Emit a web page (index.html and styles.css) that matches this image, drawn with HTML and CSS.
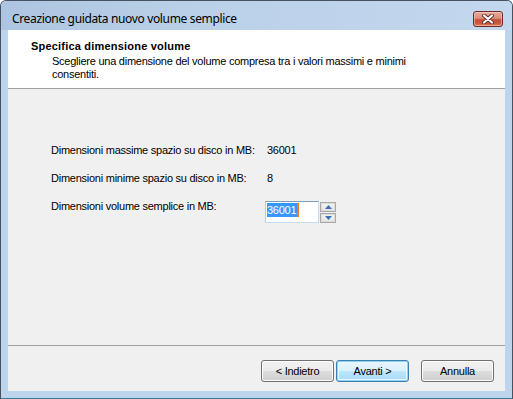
FILE: index.html
```html
<!DOCTYPE html>
<html>
<head>
<meta charset="utf-8">
<link rel="stylesheet" href="styles.css">
</head>
<body>
<div class="window">
  <div class="titlebar">
    <span class="title">Creazione guidata nuovo volume semplice</span>
    <div class="close">
      <svg width="14" height="10" viewBox="0 0 14 10">
        <path d="M3 1.5 L11 8.5 M11 1.5 L3 8.5" stroke="#5b2a25" stroke-width="4" stroke-linecap="round" fill="none"/>
        <path d="M3 1.5 L11 8.5 M11 1.5 L3 8.5" stroke="#ffffff" stroke-width="2.2" stroke-linecap="round" fill="none"/>
      </svg>
    </div>
  </div>
  <div class="client">
    <div class="header">
      <div class="h-title">Specifica dimensione volume</div>
      <div class="h-sub">Scegliere una dimensione del volume compresa tra i valori massimi e minimi<br>consentiti.</div>
    </div>
    <div class="body">
      <div class="row"><span class="label">Dimensioni massime spazio su disco in MB:</span><span class="value">36001</span></div>
      <div class="row"><span class="label">Dimensioni minime spazio su disco in MB:</span><span class="value">8</span></div>
      <div class="row"><span class="label">Dimensioni volume semplice in MB:</span>
        <div class="spin">
          <div class="input"><span class="sel">36001</span><span class="caret"></span></div>
          <div class="spinbtns">
            <div class="sb"><svg width="7" height="4" viewBox="0 0 7 4"><path d="M0 4 L3.5 0 L7 4 Z" fill="#3e6fb2"/></svg></div>
            <div class="sb"><svg width="7" height="4" viewBox="0 0 7 4"><path d="M0 0 L3.5 4 L7 0 Z" fill="#3e6fb2"/></svg></div>
          </div>
        </div>
      </div>
    </div>
    <div class="footer">
      <div class="btn">&lt; Indietro</div>
      <div class="btn default">Avanti &gt;</div>
      <div class="btn cancel">Annulla</div>
    </div>
  </div>
</div>
</body>
</html>
```
FILE: styles.css
```css
html, body {
  margin: 0;
  padding: 0;
  background: #ffffff;
}
.window {
  width: 513px;
  height: 399px;
  box-sizing: border-box;
  border: 1px solid #46525f;
  border-bottom-color: #2f7e93;
  border-radius: 6px 6px 0 0;
  background: #bcd4ec;
  display: flex;
  flex-direction: column;
  overflow: hidden;
}
.titlebar {
  height: 29px;
  flex: none;
  display: flex;
  align-items: flex-start;
  background: linear-gradient(to right, #adc5e1 0%, #bbd1e9 40%, #c3d7ee 100%);
}
.title {
  margin: 10px 0 0 11px;
  font-family: "Noto Sans", sans-serif;
  font-size: 12px;
  line-height: 16px;
  color: #000;
  flex: 1;
  letter-spacing: -0.35px;
}
.close {
  margin: 10px 9px 0 0;
  width: 30px;
  height: 16px;
  box-sizing: border-box;
  border: 1px solid #6b2a2a;
  border-radius: 3px;
  background: linear-gradient(#e9ab9c 0%, #dc8c79 45%, #c4503a 55%, #c9573f 80%, #e07a58 100%);
  box-shadow: inset 0 0 0 1px rgba(255,220,210,0.5);
  display: flex;
  align-items: center;
  justify-content: center;
}
.close svg { display: block; }
.client {
  margin: 0 7px;
  height: 361px;
  display: flex;
  flex-direction: column;
  background: #f0f0f0;
  font-family: "Liberation Sans", Arial, sans-serif;
  font-size: 11px;
  line-height: 13px;
  color: #000;
  letter-spacing: -0.25px;
}
.header {
  box-sizing: border-box;
  background: #ffffff;
  padding: 10px 0 0 23px;
  border-bottom: 1px solid #a0a0a0;
  flex: none;
  height: 59px;
}
.h-title {
  font-weight: bold;
  letter-spacing: 0.2px;
}
.h-sub {
  margin-top: 2px;
  padding-left: 21px;
}
.body {
  flex: 1;
  padding: 55px 0 0 43px;
}
.row {
  height: 28px;
  display: flex;
  align-items: flex-start;
}
.label {
  width: 214px;
  flex: none;
}
.value {
  padding-left: 2px;
}
.spin {
  display: flex;
  margin-top: 1px;
}
.input {
  width: 54px;
  height: 22px;
  box-sizing: border-box;
  background: #fff;
  border: 1px solid;
  border-color: #7f9db9 #c5daed #c5dbef #b5cfe7;
  display: flex;
  align-items: flex-start;
  padding: 1px 0 0 1px;
}
.sel {
  background: #3399ff;
  color: #fff;
  line-height: 14px;
  padding-right: 1px;
}
.caret {
  width: 2px;
  height: 14px;
  background: #ee7a1a;
}
.spinbtns {
  margin-left: 1px;
  display: flex;
  flex-direction: column;
  gap: 1px;
  padding-top: 1px;
}
.sb {
  width: 16px;
  height: 10px;
  box-sizing: border-box;
  border: 1px solid #a8a8a8;
  box-shadow: inset 0 0 0 1px #dcdcdc;
  background: linear-gradient(#f4f4f4, #e4e4e4);
  display: flex;
  align-items: center;
  justify-content: center;
}
.sb svg { display: block; }
.footer {
  height: 46px;
  flex: none;
  box-sizing: border-box;
  border-top: 1px solid #a0a0a0;
  display: flex;
  align-items: flex-start;
  justify-content: flex-end;
  padding: 14px 11px 0 0;
}
.btn {
  width: 73px;
  height: 22px;
  box-sizing: border-box;
  border: 1px solid #707070;
  border-radius: 3px;
  background: linear-gradient(#f2f2f2 0%, #ebebeb 50%, #dddddd 50%, #cfcfcf 100%);
  box-shadow: inset 0 0 0 1px #fcfcfc;
  display: flex;
  align-items: center;
  justify-content: center;
  margin-left: 2px;
}
.btn.default {
  border-color: #3c7fb1;
  background: linear-gradient(#eaf6fd 0%, #d9f0fc 50%, #bee6fd 50%, #a7d9f5 100%);
  box-shadow: inset 0 0 0 1px #8fd2f5, inset 0 0 0 2px #e8f6fd;
}
.btn.cancel {
  margin-left: 12px;
}
```
